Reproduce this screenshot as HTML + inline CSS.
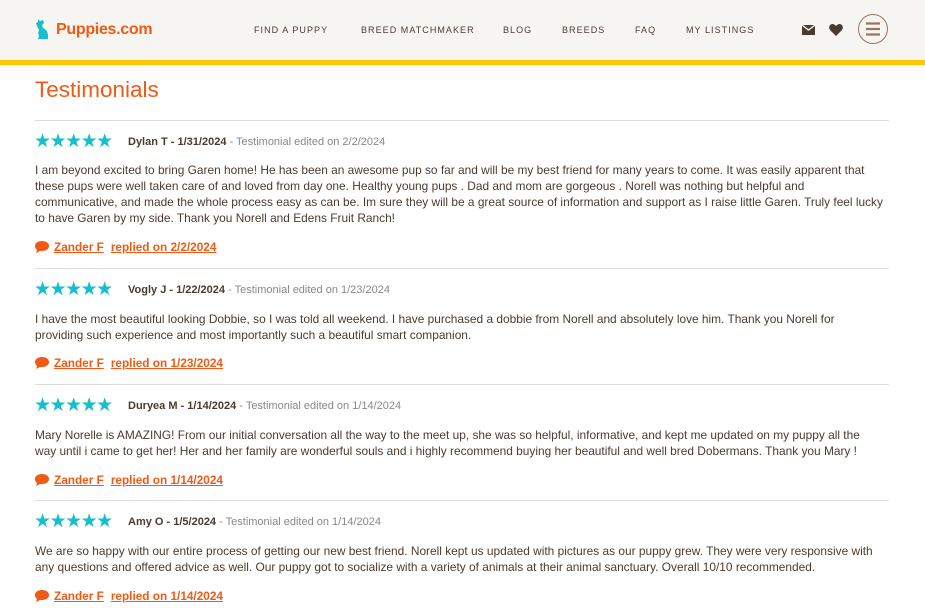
<!DOCTYPE html>
<html><head><style>
*{margin:0;padding:0;box-sizing:border-box}
body{width:925px;height:610px;overflow:hidden;background:#fff;font-family:"Liberation Sans",Arial,sans-serif;color:#4a3b30;position:relative}
.hdr{position:absolute;left:0;top:0;width:925px;height:60px;background:#f7f5f2}
.bar{position:absolute;left:0;top:60px;width:925px;height:5px;background:#ffc800}
.logo{position:absolute;left:56px;top:21px;font-size:16px;font-weight:bold;color:#f05a14;letter-spacing:-0.3px}
.nav{position:absolute;top:25px;font-size:9px;letter-spacing:1.05px;color:#4a3b30}
.ab{position:absolute}
h1{position:absolute;left:35px;top:77px;font-size:22.5px;font-weight:normal;color:#f05a14}
.sep{position:absolute;left:35px;width:854px;height:1px;background:#dcdcdc}
.stars{position:absolute;left:34px;font-size:19px;color:#17bfcc;letter-spacing:-1.5px;line-height:16px}
.name{position:absolute;left:128px;font-size:11px;line-height:14px;white-space:nowrap}
.name b{color:#4a3b30}.name span{color:#888}
.txt{position:absolute;left:35px;font-size:11.9px;line-height:16px;white-space:nowrap;color:#4a3b30}
.rep{position:absolute;left:35px;font-size:11.8px;font-weight:bold;color:#f05a14;white-space:nowrap;line-height:14px}
.rep svg{vertical-align:-2px;margin-right:5px}
.rep u+u{margin-left:7px}
</style></head><body>
<div class="hdr"></div><div class="bar"></div>
<svg class="ab" style="left:35px;top:18px" width="16" height="22" viewBox="0 0 16 22"><path fill="#17bfcc" d="M3 1l2 2 3-1 1 3-2 2 1 3c3 1 5 4 5 8v3H3l1-3c-1-2-1-4 0-6L2 8 1 5l2-1z"/></svg>
<div class="logo">Puppies.com</div>
<div class="nav" style="left:254px">FIND A PUPPY</div>
<div class="nav" style="left:361px">BREED MATCHMAKER</div>
<div class="nav" style="left:503px">BLOG</div>
<div class="nav" style="left:562px">BREEDS</div>
<div class="nav" style="left:635px">FAQ</div>
<div class="nav" style="left:686px">MY LISTINGS</div>
<svg class="ab" style="left:802px;top:25px" width="13" height="10" viewBox="0 0 13 10"><rect width="13" height="10" fill="#4a3b30"/><path d="M0 0l6.5 5L13 0" stroke="#f7f5f2" stroke-width="1.3" fill="none"/></svg>
<svg class="ab" style="left:829px;top:24px" width="14" height="12" viewBox="0 0 14 12"><path fill="#4a3b30" d="M7 12L1 6C-1 3 1 0 3.5 0 5 0 6 1 7 2 8 1 9 0 10.5 0 13 0 15 3 13 6z"/></svg>
<svg class="ab" style="left:857px;top:13px" width="32" height="32" viewBox="0 0 32 32"><circle cx="16" cy="16" r="14.5" fill="none" stroke="#9a7462" stroke-width="1"/><path d="M9 10.5h14M9 16h14M9 21.5h14" stroke="#9a7462" stroke-width="2.2"/></svg>
<h1>Testimonials</h1>
<div class="sep" style="top:120px"></div>

<div class="stars" style="top:134px">★★★★★</div>
<div class="name" style="top:135px"><b>Dylan T - 1/31/2024</b> <span>- Testimonial edited on 2/2/2024</span></div>
<div class="txt" style="top:162px">I am beyond excited to bring Garen home! He has been an awesome pup so far and will be my best friend for many years to come. It was easily apparent that<br>these pups were well taken care of and loved from day one. Healthy young pups . Dad and mom are gorgeous . Norell was nothing but helpful and<br>communicative, and made the whole process easy as can be. Im sure they will be a great source of information and support as I raise little Garen. Truly feel lucky<br>to have Garen by my side. Thank you Norell and Edens Fruit Ranch!</div>
<div class="rep" style="top:240px"><svg width="14" height="12" viewBox="0 0 14 12"><path fill="#f05a14" d="M7 0C3 0 0 2 0 5c0 2 1 3 2 4l-1 3 4-2c1 0 1 0 2 0 4 0 7-2 7-5S11 0 7 0z"/></svg><u>Zander F</u><u>replied on 2/2/2024</u></div>
<div class="sep" style="top:268px"></div>

<div class="stars" style="top:282px">★★★★★</div>
<div class="name" style="top:283px"><b>Vogly J - 1/22/2024</b> <span>- Testimonial edited on 1/23/2024</span></div>
<div class="txt" style="top:311px">I have the most beautiful looking Dobbie, so I was told all weekend. I have purchased a dobbie from Norell and absolutely love him. Thank you Norell for<br>providing such experience and most importantly such a beautiful smart companion.</div>
<div class="rep" style="top:356px"><svg width="14" height="12" viewBox="0 0 14 12"><path fill="#f05a14" d="M7 0C3 0 0 2 0 5c0 2 1 3 2 4l-1 3 4-2c1 0 1 0 2 0 4 0 7-2 7-5S11 0 7 0z"/></svg><u>Zander F</u><u>replied on 1/23/2024</u></div>
<div class="sep" style="top:384px"></div>

<div class="stars" style="top:398px">★★★★★</div>
<div class="name" style="top:399px"><b>Duryea M - 1/14/2024</b> <span>- Testimonial edited on 1/14/2024</span></div>
<div class="txt" style="top:427px">Mary Norelle is AMAZING! From our initial conversation all the way to the meet up, she was so helpful, informative, and kept me updated on my puppy all the<br>way until i came to get her! Her and her family are wonderful souls and i highly recommend buying her beautiful and well bred Dobermans. Thank you Mary !</div>
<div class="rep" style="top:473px"><svg width="14" height="12" viewBox="0 0 14 12"><path fill="#f05a14" d="M7 0C3 0 0 2 0 5c0 2 1 3 2 4l-1 3 4-2c1 0 1 0 2 0 4 0 7-2 7-5S11 0 7 0z"/></svg><u>Zander F</u><u>replied on 1/14/2024</u></div>
<div class="sep" style="top:500px"></div>

<div class="stars" style="top:514px">★★★★★</div>
<div class="name" style="top:515px"><b>Amy O - 1/5/2024</b> <span>- Testimonial edited on 1/14/2024</span></div>
<div class="txt" style="top:543px">We are so happy with our entire process of getting our new best friend. Norell kept us updated with pictures as our puppy grew. They were very responsive with<br>any questions and offered advice as well. Our puppy got to socialize with a variety of animals at their animal sanctuary. Overall 10/10 recommended.</div>
<div class="rep" style="top:589px"><svg width="14" height="12" viewBox="0 0 14 12"><path fill="#f05a14" d="M7 0C3 0 0 2 0 5c0 2 1 3 2 4l-1 3 4-2c1 0 1 0 2 0 4 0 7-2 7-5S11 0 7 0z"/></svg><u>Zander F</u><u>replied on 1/14/2024</u></div>
</body></html>
